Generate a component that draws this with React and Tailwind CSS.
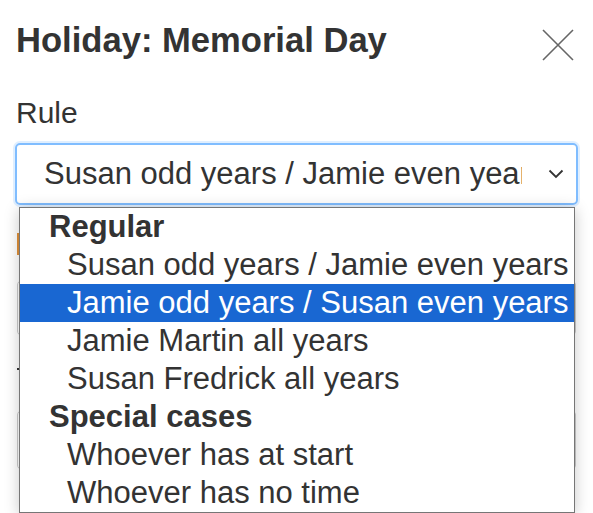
const groups = [
  {
    label: 'Regular',
    options: [
      'Susan odd years / Jamie even years',
      'Jamie odd years / Susan even years',
      'Jamie Martin all years',
      'Susan Fredrick all years',
    ],
  },
  {
    label: 'Special cases',
    options: ['Whoever has at start', 'Whoever has no time'],
  },
]

const selected = 'Jamie odd years / Susan even years'

export default function App() {
  return (
    <div className="w-[593px] h-[513px] overflow-hidden bg-white text-[#333] font-['Liberation_Sans',Arial,sans-serif]">
      <div className="relative px-[17px] pt-[20px]">
        {/* header */}
        <div className="flex items-start justify-between">
          <h2 className="-ml-[1px] text-[34.6px] leading-[41px] font-bold">Holiday: Memorial Day</h2>
          <button className="mt-[9px] mr-[2px] text-[#666]">
            <svg width="32" height="32" viewBox="0 0 32 32" fill="none" stroke="currentColor" strokeWidth="1.6">
              <path d="M1 1 L31 31 M31 1 L1 31" />
            </svg>
          </button>
        </div>

        {/* rule field */}
        <label className="block mt-[29px] -ml-[1px] text-[30px] leading-[45px]">Rule</label>
        <div className="mt-[8px] -mx-[2px] h-[62px] rounded-[5px] border-2 border-[#80bdff] shadow-[0_0_0_2px_rgba(0,123,255,0.12)] flex items-center pl-[27px] pr-[8px]">
          <span className="flex-1 whitespace-nowrap overflow-hidden text-[31px] leading-[38px] max-w-[478px]">
            Susan odd years / Jamie even years
          </span>
          <svg className="ml-auto mr-[4px]" width="16" height="10" viewBox="0 0 16 10" fill="none" stroke="#333" strokeWidth="1.8">
            <path d="M1.5 1.5 L8 8 L14.5 1.5" />
          </svg>
        </div>

        {/* form content underneath the open list */}
        <div className="mt-[28px] h-[22px] w-[200px] border-l-2 border-[#e0913a]" />
        <div className="mt-[25px] h-[56px] rounded-[5px] border border-[#ccc]" />
        <div className="mt-[32px] h-[2px] w-[60px] bg-[#333]" />
        <div className="mt-[40px] h-[60px] rounded-[5px] border border-[#ccc]" />

        {/* open option list */}
        <div className="absolute left-[19px] top-[207px] w-[556px] bg-white border border-[#767676] shadow-[0_2px_14px_rgba(0,0,0,0.22)]">
          {groups.map((g) => (
            <div key={g.label}>
              <div className="h-[38px] flex items-center pl-[29px] text-[31px] font-bold whitespace-nowrap">{g.label}</div>
              {g.options.map((o) => (
                <div
                  key={o}
                  className={`h-[38px] flex items-center pl-[47px] text-[31px] whitespace-nowrap ${
                    o === selected ? 'bg-[#1967d2] text-white' : ''
                  }`}
                >
                  {o}
                </div>
              ))}
            </div>
          ))}
        </div>
      </div>
    </div>
  )
}
